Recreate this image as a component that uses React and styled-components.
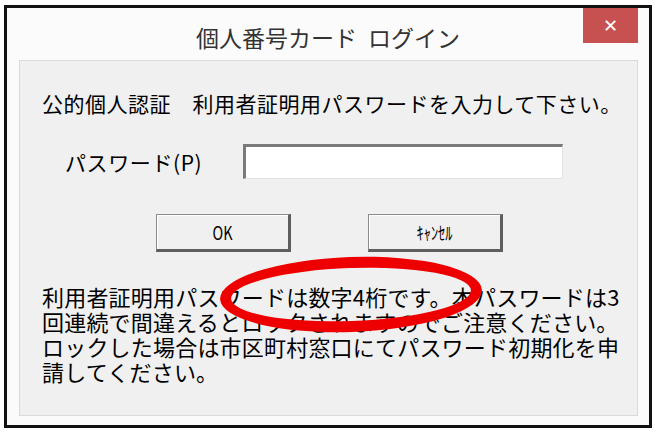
import React from "react";
import styled, { createGlobalStyle } from "styled-components";

const GlobalStyle = createGlobalStyle`
  body {
    margin: 0;
    background: #ffffff;
    font-family: "Noto Sans CJK JP", "Noto Sans", sans-serif;
  }
`;

const Frame = styled.div`
  box-sizing: border-box;
  margin: 5px 0 0 4px;
  width: 648px;
  height: 423px;
  border: 3px solid #111;
  background: #fbfbfb;
  display: flex;
  flex-direction: column;
`;

const TitleBar = styled.div`
  height: 52px;
  display: grid;
  grid-template-columns: 1fr auto 1fr;
  align-items: start;
`;

const Title = styled.div`
  grid-column: 2;
  padding-top: 14px;
  font-size: 23px;
  line-height: 30px;
  color: #333;
  white-space: nowrap;
  word-spacing: 6px;
`;

const CloseButton = styled.div`
  grid-column: 3;
  justify-self: end;
  margin-right: 11px;
  width: 55px;
  height: 35px;
  background: #c75050;
  color: #fff;
  display: flex;
  align-items: center;
  justify-content: center;
  font-family: "DejaVu Sans", sans-serif;
  font-weight: bold;
  font-size: 18px;
`;

const Panel = styled.div`
  position: relative;
  box-sizing: border-box;
  margin: 0 11px 9px 12px;
  flex: 1;
  border: 1px solid #dadada;
  background: #f0f0f0;
  padding: 30px 0 0 22px;
  color: #000;
`;

const Line = styled.div`
  font-size: 21px;
  line-height: 25px;
  letter-spacing: 0.5px;
  white-space: nowrap;
`;

const PasswordRow = styled.div`
  margin-top: 28px;
  display: flex;
  align-items: center;
  padding-left: 23px;
`;

const Label = styled.span`
  font-size: 21px;
  letter-spacing: 0.6px;
  width: 178px;
  white-space: nowrap;
`;

const Input = styled.input`
  box-sizing: border-box;
  width: 320px;
  height: 35px;
  border-style: solid;
  border-width: 3px 1px 1px 3px;
  border-color: #7a7a7a #e2e2e2 #e2e2e2 #7a7a7a;
  background: #fff;
  outline: none;
`;

const ButtonRow = styled.div`
  margin-top: 35px;
  display: flex;
  gap: 77px;
  padding-left: 114px;
`;

const Button = styled.div`
  box-sizing: border-box;
  width: 135px;
  height: 38px;
  border-style: solid;
  border-width: 1px 3px 3px 1px;
  border-color: #8c8c8c #5e5e5e #5e5e5e #8c8c8c;
  box-shadow: inset 1px 1px 0 #fff;
  background: #f0f0f0;
  display: flex;
  align-items: center;
  justify-content: center;
  font-size: 18px;
`;

const ButtonText = styled.span`
  display: inline-block;
  transform: scaleX(0.8);
`;

const Note = styled.div`
  margin-top: 32px;
  font-size: 22px;
  line-height: 25px;
  letter-spacing: 0.2px;
  white-space: nowrap;
`;

const Circle = styled.div`
  position: absolute;
  left: 200px;
  top: 196px;
  width: 262px;
  height: 75px;
  box-sizing: border-box;
  border: 11px solid #ee0000;
  border-radius: 50%;
  transform: rotate(-2deg);
`;

export default function App() {
  return (
    <>
      <GlobalStyle />
      <Frame>
        <TitleBar>
          <Title>個人番号カード ログイン</Title>
          <CloseButton>✕</CloseButton>
        </TitleBar>
        <Panel>
          <Line>公的個人認証　利用者証明用パスワードを入力して下さい。</Line>
          <PasswordRow>
            <Label>パスワード(P)</Label>
            <Input type="password" />
          </PasswordRow>
          <ButtonRow>
            <Button><ButtonText>OK</ButtonText></Button>
            <Button><ButtonText>ｷｬﾝｾﾙ</ButtonText></Button>
          </ButtonRow>
          <Note>
            利用者証明用パスワードは数字4桁です。本パスワードは3
            <br />
            回連続で間違えるとロックされますのでご注意ください。
            <br />
            ロックした場合は市区町村窓口にてパスワード初期化を申
            <br />
            請してください。
          </Note>
          <Circle />
        </Panel>
      </Frame>
    </>
  );
}
